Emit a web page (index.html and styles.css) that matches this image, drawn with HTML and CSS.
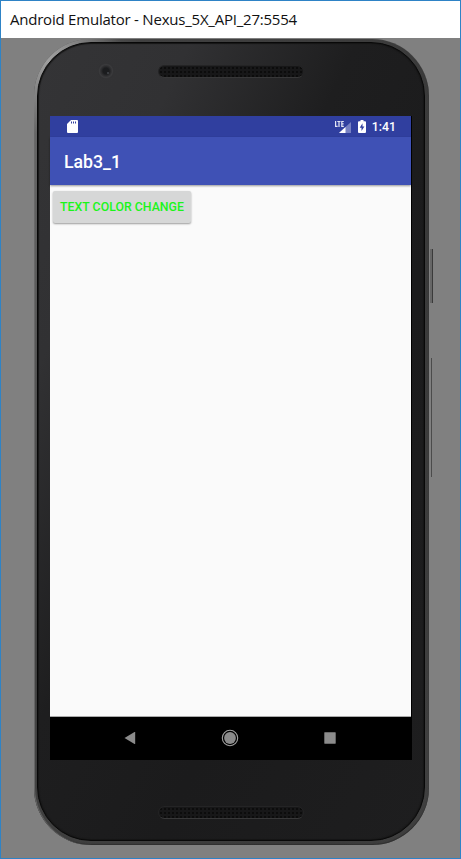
FILE: index.html
```html
<!DOCTYPE html>
<html lang="en">
<head>
<meta charset="utf-8">
<title>Android Emulator</title>
<link rel="stylesheet" href="styles.css">
</head>
<body>
<div class="window">
  <header class="titlebar"><span class="title">Android Emulator - Nexus_5X_API_27:5554</span></header>
  <main class="stage">
    <div class="phone">
      <i class="key power"></i>
      <i class="key volume"></i>
      <div class="face">
        <div class="bezel top"><i class="camera"></i><i class="speaker"></i></div>
        <div class="screen">
          <div class="status">
            <svg class="sd" width="11" height="13" viewBox="0 0 11 13"><path fill="#fff" d="M4 0h6q1 0 1 1v11q0 1-1 1H1q-1 0-1-1V4z"/><path stroke="#303f9f" stroke-width="1" d="M4.500 1.500v2M6.500 1.500v2M8.500 1.500v2"/></svg>
            <svg class="signal" width="17" height="14" viewBox="0 0 17 14"><path fill="#7680c2" d="M16 2v11H4z"/><path fill="#fff" d="M10.500 7V13H4z"/><path fill="none" stroke="#e4e7f5" stroke-width="1.200" d="M.6 1v5.400h2M2.300 1.500h3.200M4 1.500v5.500M8.800 1.500H6.800v4.900h2M6.800 3.900h1.800"/></svg>
            <svg class="battery" width="8" height="13" viewBox="0 0 8 13"><path fill="#fff" d="M2.500 0h3v1.300H7q1 0 1 1V12q0 1-1 1H1q-1 0-1-1V2.300q0-1 1-1h1.500z"/><path fill="#303f9f" d="M4.500 3.300 1.700 7.800h1.800V11l2.900-4.600H4.500z"/></svg>
            <span class="clock">1:41</span>
          </div>
          <div class="appbar">Lab3_1</div>
          <div class="content"><button class="button">TEXT COLOR CHANGE</button></div>
          <nav class="nav">
            <svg width="12" height="14" viewBox="0 0 12 14"><path fill="#8b8b8b" d="M.5 7 10.500 1q.7-.4.7.5v11q0 .9-.7.500z"/></svg>
            <svg width="18" height="18" viewBox="0 0 18 18"><circle cx="9" cy="9" r="7.700" fill="none" stroke="#a0a0a0" stroke-width="1.100"/><circle cx="9" cy="9" r="5.900" fill="#8b8b8b"/></svg>
            <svg width="12" height="12" viewBox="0 0 12 12"><rect x=".3" y=".3" width="11.400" height="11.400" rx=".4" fill="#8b8b8b"/></svg>
          </nav>
        </div>
        <div class="bezel bottom"><i class="speaker"></i></div>
      </div>
    </div>
  </main>
</div>
</body>
</html>
```

FILE: styles.css
```css
* { box-sizing: border-box; }
body { margin: 0; }
.window {
  display: flex;
  flex-direction: column;
  width: 461px;
  height: 859px;
  border: 1px solid #2e83c6;
  background: #808080;
  overflow: hidden;
}
.titlebar {
  flex: 0 0 37px;
  padding-left: 9px;
  background: #fff;
  color: #111;
  font: 15px/37px "Open Sans", sans-serif;
  white-space: nowrap;
}
.title { letter-spacing: -0.22px; }
.stage { flex: 1; padding: 1px 0 0 33px; }
.phone {
  position: relative;
  width: 395px;
  height: 806px;
  padding: 3px 4px 4px 3px;
  border-radius: 57px;
  background: linear-gradient(100deg, #6c6c6c 0, #666 3%, #404040 20%, #3a3a3a 80%, #404040 100%);
  box-shadow: inset 1px 0 1px #6b6b6b, inset 0 -1px 1px #2a2a2a;
}
.phone::before {
  content: "";
  position: absolute;
  left: 0;
  top: 0;
  width: 110px;
  height: 110px;
  border-radius: 57px 0 0 0;
  background: radial-gradient(circle at 14px 20px, #a0a0a0 0, rgba(150, 150, 150, 0.7) 30px, transparent 75px);
}
.face {
  position: relative;
  display: flex;
  flex-direction: column;
  height: 799px;
  padding: 0 12px;
  border: 1px solid #080808;
  border-radius: 54px;
  background: linear-gradient(115deg, #343436 0, #313133 20%, #1e1e1f 42%, #1b1b1c 65%, #1e1e1f 100%);
  box-shadow: inset 0 0 1px 1px #161616;
}
.bezel { display: flex; justify-content: center; }
.top { position: relative; flex: 0 0 73px; padding: 22px 1px 0 0; }
.bottom { padding: 46px 1px 0 0; }
.speaker {
  width: 146px;
  height: 13px;
  border: 1px solid #242425;
  border-bottom-color: #373738;
  border-radius: 7px;
  background: radial-gradient(circle, #0c0c0c 0.8px, transparent 1.200px) 0 0 / 4px 4px, #171718;
}
.camera {
  position: absolute;
  left: 48px;
  top: 20px;
  width: 16px;
  height: 16px;
  border-radius: 50%;
  background: radial-gradient(circle at 10px 10px, #55595f 0, transparent 1.500px), radial-gradient(circle, #1b1c1e 0 3px, #2e2e30 5px, #3a3a3c 6.500px, #313133 8px);
}
.key { position: absolute; background: #3a3a3a; }
.power { left: 396px; top: 210px; width: 3px; height: 54px; border-left: 2px solid #666; }
.volume { left: 397px; top: 319px; width: 1px; height: 119px; background: #4b4b4b; }
.screen {
  display: flex;
  flex-direction: column;
  flex: 0 0 644px;
  width: 362px;
  background: #000;
  font-family: Roboto, sans-serif;
}
.status {
  display: flex;
  align-items: center;
  flex: 0 0 21px;
  width: 361px;
  padding: 0 15px 0 17px;
  background: #303f9f;
  color: #fff;
}
.signal { margin-left: auto; }
.battery { margin-left: 6px; }
.clock {
  margin-left: 6px;
  padding-top: 1px;
  font-size: 12.300px;
  font-weight: 500;
  line-height: 20px;
}
.appbar {
  position: relative;
  flex: 0 0 48px;
  width: 361px;
  padding: 3px 0 0 14px;
  background: #3f51b5;
  box-shadow: 0 1px 2px rgba(0, 0, 0, 0.4);
  color: #fff;
  font-size: 17.700px;
  font-weight: 500;
  line-height: 45px;
}
.content {
  flex: 0 0 532px;
  width: 361px;
  padding: 6px 3px;
  border-bottom: 1px solid #aaa;
  background: #fafafa;
}
.button {
  display: block;
  width: 138px;
  height: 32px;
  padding: 0;
  border: 0;
  border-radius: 2px;
  background: #d6d7d7;
  box-shadow: 0 1px 2px rgba(0, 0, 0, 0.38);
  color: #1bf51b;
  font: 500 12.350px/32px Roboto, sans-serif;
  white-space: nowrap;
}
.nav {
  display: flex;
  align-items: center;
  justify-content: space-between;
  height: 42px;
  padding: 0 76px 1px 74px;
}
```
